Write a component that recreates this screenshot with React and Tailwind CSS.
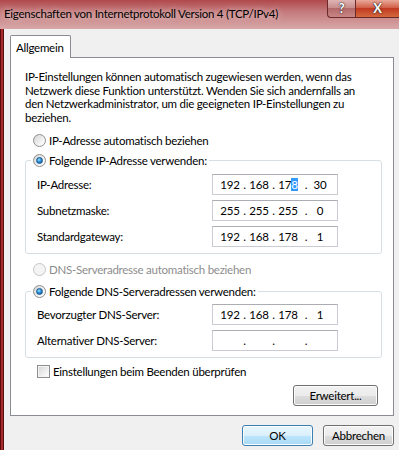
import React from "react";

const font = "font-['Lato','Liberation_Sans',sans-serif]";

function Radio({ checked, disabled }) {
    return (
        <div className={`w-[13px] h-[13px] rounded-full border flex items-center justify-center shrink-0 ${disabled ? 'border-[#c6c6c6] bg-[#f4f4f4]' : 'border-[#8e8f8f] bg-[linear-gradient(135deg,#d4d4d4,#f6f6f6_70%,#ffffff)]'}`}>
            {checked && (
                <div className="w-[7px] h-[7px] rounded-full bg-[radial-gradient(circle_at_40%_35%,#9fe3ff_0%,#2a8fd6_45%,#0f4a86_100%)] border border-[#1b5b95]" />
            )}
        </div>
    );
}

function RadioRow({ label, checked, disabled }) {
    return (
        <div className="flex items-center gap-[3px] h-[15px]">
            <Radio checked={checked} disabled={disabled} />
            <span className={`leading-[15px] whitespace-nowrap ${disabled ? 'text-[#8d8d8d]' : 'text-black'}`}>{label}</span>
        </div>
    );
}

// IP address control with 4 octets
function IpBox({ parts, selectLast }) {
    const [a, b, c, d] = parts;
    return (
        <div className="w-[126px] h-[21px] border border-[#c9ccd2] border-t-[#abadb3] bg-white flex items-center pl-[5px] leading-[19px]">
            <span className="w-[24px] text-center">{a}</span>
            <span className="w-[5px] text-center">.</span>
            <span className="w-[24px] text-center">{b}</span>
            <span className="w-[5px] text-center">.</span>
            <span className="w-[24px] text-center">
                {selectLast ? <>{c.slice(0, 2)}<span className="bg-[#3399ff] text-white">{c.slice(2)}</span></> : c}
            </span>
            <span className="w-[12px] text-center">.</span>
            <span className="w-[16px] text-center">{d}</span>
        </div>
    );
}

function FieldRow({ label, parts, selectLast }) {
    return (
        <div className="flex items-center">
            <span className="w-[175px] whitespace-nowrap">{label}</span>
            <IpBox parts={parts} selectLast={selectLast} />
        </div>
    );
}

function WinButton({ children, primary, className = '' }) {
    return (
        <div className={`h-[21px] rounded-[3px] border flex items-center justify-center shadow-[inset_0_0_0_1px_#fcfcfc] ${primary
            ? 'border-[#3c7fb1] bg-[linear-gradient(#eaf6fd_0%,#d9f0fc_50%,#bee6fd_50%,#a7d9f5_100%)]'
            : 'border-[#707070] bg-[linear-gradient(#f2f2f2_0%,#ebebeb_50%,#dddddd_50%,#cfcfcf_100%)]'} ${className}`}>
            {children}
        </div>
    );
}

export default function App() {
    return (
        <div className={`w-[399px] h-[450px] overflow-hidden text-[11.5px] tracking-[-0.25px] text-black ${font} bg-[#a83232]`}>
            {/* Title bar */}
            <div className="h-[29px] flex bg-[linear-gradient(#b0494c,#c47a7c_40%,#d8a8a8)]">
                <div className="flex-1 pl-[4px] pt-[6px] leading-[16px] whitespace-nowrap [text-shadow:0_0_6px_rgba(255,255,255,0.8)]">
                    Eigenschaften von Internetprotokoll Version 4 (TCP/IPv4)
                </div>
                <div className="flex items-start">
                    <div className="w-[28px] h-[18px] rounded-bl-[4px] border border-t-0 border-r-0 border-[#6b2a2a] bg-[linear-gradient(#e0b4b4,#c98e8e_45%,#b56a6a_50%,#c88585)] flex items-center justify-center text-white font-bold text-[13px] leading-none [text-shadow:0_0_2px_#333,0_0_1px_#000]">?</div>
                    <div className="w-[44px] h-[18px] border border-t-0 border-r-0 border-[#6b2a2a] bg-[linear-gradient(#e8a99a,#d2604a_45%,#c23a22_50%,#d2683c)] flex items-center justify-center text-white font-bold text-[13px] leading-none [text-shadow:0_0_2px_#333,0_0_1px_#000]">X</div>
                </div>
            </div>

            {/* Body */}
            <div className="flex h-[421px]">
                <div className="w-[4px] bg-[linear-gradient(to_right,#5a0a0a_0,#5a0a0a_1px,#a52a2a_1px,#a52a2a_3px,#5a1010_3px)]" />
                <div className="flex-1 bg-[#f0f0f0] pt-[6px] pl-[6px]">
                    <div className="w-[384px]">
                        {/* Tab */}
                        <div className="flex">
                            <div className="relative z-10 w-[61px] h-[23px] -mb-px border border-b-0 border-[#898c95] bg-white rounded-t-[2px] pl-[5px] pt-[4px] leading-[15px]">
                                Allgemein
                            </div>
                        </div>
                        {/* Panel */}
                        <div className="h-[359px] border border-[#898c95] bg-white pl-[14px] pr-[11px] pt-[12px]">
                            <p className="leading-[13.5px] whitespace-nowrap">
                                IP-Einstellungen können automatisch zugewiesen werden, wenn das<br />
                                Netzwerk diese Funktion unterstützt. Wenden Sie sich andernfalls an<br />
                                den Netzwerkadministrator, um die geeigneten IP-Einstellungen zu<br />
                                beziehen.
                            </p>
                            <div className="mt-[9px] ml-[8px]">
                                <RadioRow label="IP-Adresse automatisch beziehen" />
                            </div>
                            <fieldset className="mt-[5px] border border-[#d5dfe5] rounded-[3px]">
                                <legend className="ml-[5px] px-[2px]">
                                    <RadioRow label="Folgende IP-Adresse verwenden:" checked />
                                </legend>
                                <div className="pl-[11px] pt-[6px] pb-[6px] flex flex-col gap-[5px]">
                                    <FieldRow label="IP-Adresse:" parts={['192', '168', '178', '30']} selectLast />
                                    <FieldRow label="Subnetzmaske:" parts={['255', '255', '255', '0']} />
                                    <FieldRow label="Standardgateway:" parts={['192', '168', '178', '1']} />
                                </div>
                            </fieldset>
                            <div className="mt-[8px] ml-[8px]">
                                <RadioRow label="DNS-Serveradresse automatisch beziehen" disabled />
                            </div>
                            <fieldset className="mt-[7px] border border-[#d5dfe5] rounded-[3px]">
                                <legend className="ml-[5px] px-[2px]">
                                    <RadioRow label="Folgende DNS-Serveradressen verwenden:" checked />
                                </legend>
                                <div className="pl-[11px] pt-[5px] pb-[6px] flex flex-col gap-[5px]">
                                    <FieldRow label="Bevorzugter DNS-Server:" parts={['192', '168', '178', '1']} />
                                    <FieldRow label="Alternativer DNS-Server:" parts={['', '', '', '']} />
                                </div>
                            </fieldset>
                            <div className="mt-[6px] ml-[12px] flex items-center gap-[3px] h-[15px]">
                                <div className="w-[13px] h-[13px] border border-[#8e8f8f] bg-[linear-gradient(135deg,#d4d4d4,#f4f4f4_70%,#ffffff)] shadow-[inset_0_0_0_1px_#f4f4f4]" />
                                <span className="leading-[15px] whitespace-nowrap">Einstellungen beim Beenden überprüfen</span>
                            </div>
                            <div className="mt-[6px] flex justify-end pr-[4px]">
                                <WinButton className="w-[85px]">Erweitert...</WinButton>
                            </div>
                        </div>
                        {/* Dialog buttons */}
                        <div className="mt-[9px] flex justify-end gap-[10px]">
                            <WinButton primary className="w-[71px]">OK</WinButton>
                            <WinButton className="w-[71px]">Abbrechen</WinButton>
                        </div>
                    </div>
                </div>
            </div>
        </div>
    );
}
